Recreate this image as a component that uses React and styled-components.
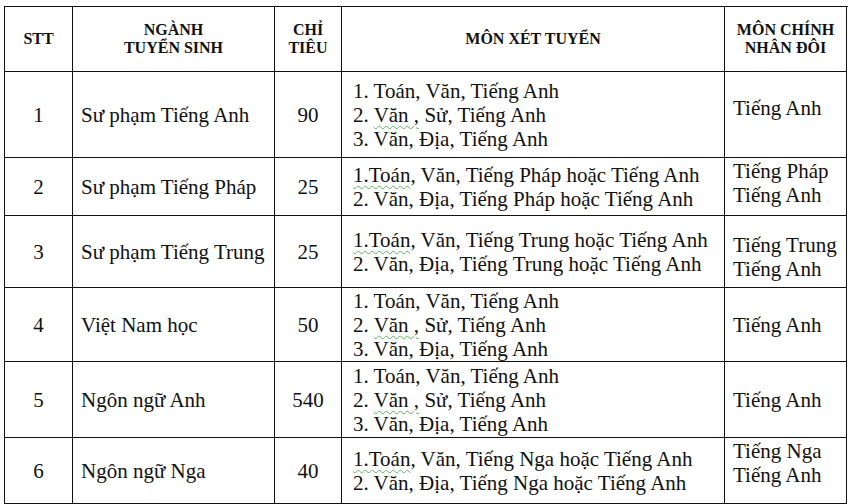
import React from 'react';
import styled, { createGlobalStyle } from 'styled-components';

const SERIF = "'Liberation Serif', 'Times New Roman', serif";

const GlobalStyle = createGlobalStyle`
  html, body {
    margin: 0;
    padding: 0;
    background: #fff;
    color: #111;
  }
`;

const Page = styled.div`
  padding: 6px 0 0 4px;
  font-family: ${SERIF};
`;

const Table = styled.div`
  width: 843px;
  border-top: 1px solid #111;
  border-left: 1px solid #111;
`;

const Row = styled.div`
  display: grid;
  grid-template-columns: 68px 202px 67px 383px 122px;
  height: ${props => props.$h}px;
`;

const HeadCell = styled.div`
  display: flex;
  align-items: center;
  justify-content: center;
  text-align: center;
  box-sizing: border-box;
  border-right: 1px solid #111;
  border-bottom: 1px solid #111;
  font-family: ${SERIF};
  font-size: 16px;
  font-weight: 700;
  line-height: 18px;
  text-transform: uppercase;
`;

const Cell = styled.div`
  display: flex;
  flex-direction: column;
  justify-content: center;
  align-items: ${props => (props.$center ? 'center' : 'flex-start')};
  box-sizing: border-box;
  border-right: 1px solid #111;
  border-bottom: 1px solid #111;
  font-family: ${SERIF};
  font-size: 21px;
  line-height: 24px;
  padding: ${props => props.$pad || '0'};
  white-space: nowrap;
`;

const Line = styled.div`
  white-space: nowrap;
`;

const Squiggle = styled.span`
  text-decoration: underline wavy #5cb85c;
  text-decoration-thickness: 1px;
  text-underline-offset: 3px;
`;

const rows = [
  {
    stt: '1', name: 'Sư phạm Tiếng Anh', quota: '90', h: 86,
    subjects: [
      <>1. Toán, Văn, Tiếng Anh</>,
      <>2. <Squiggle>Văn ,</Squiggle> Sử, Tiếng Anh</>,
      <>3. Văn, Địa, Tiếng Anh</>,
    ],
    main: ['Tiếng Anh'], mainPad: '0 0 14px 8px',
  },
  {
    stt: '2', name: 'Sư phạm Tiếng Pháp', quota: '25', h: 58,
    subjects: [
      <><Squiggle>1.Toán</Squiggle>, Văn, Tiếng Pháp hoặc Tiếng Anh</>,
      <>2. Văn, Địa, Tiếng Pháp hoặc Tiếng Anh</>,
    ],
    main: ['Tiếng Pháp', 'Tiếng Anh'], mainPad: '0 0 8px 8px',
  },
  {
    stt: '3', name: 'Sư phạm Tiếng Trung', quota: '25', h: 72,
    subjects: [
      <><Squiggle>1.Toán</Squiggle>, Văn, Tiếng Trung hoặc Tiếng Anh</>,
      <>2. Văn, Địa, Tiếng Trung hoặc Tiếng Anh</>,
    ],
    main: ['Tiếng Trung', 'Tiếng Anh'], mainPad: '10px 0 0 8px',
  },
  {
    stt: '4', name: 'Việt Nam học', quota: '50', h: 74,
    subjects: [
      <>1. Toán, Văn, Tiếng Anh</>,
      <>2. <Squiggle>Văn ,</Squiggle> Sử, Tiếng Anh</>,
      <>3. Văn, Địa, Tiếng Anh</>,
    ],
    main: ['Tiếng Anh'], mainPad: '0 0 0 8px',
  },
  {
    stt: '5', name: 'Ngôn ngữ Anh', quota: '540', h: 76,
    subjects: [
      <>1. Toán, Văn, Tiếng Anh</>,
      <>2. <Squiggle>Văn ,</Squiggle> Sử, Tiếng Anh</>,
      <>3. Văn, Địa, Tiếng Anh</>,
    ],
    main: ['Tiếng Anh'], mainPad: '0 0 0 8px',
  },
  {
    stt: '6', name: 'Ngôn ngữ Nga', quota: '40', h: 66,
    subjects: [
      <><Squiggle>1.Toán</Squiggle>, Văn, Tiếng Nga hoặc Tiếng Anh</>,
      <>2. Văn, Địa, Tiếng Nga hoặc Tiếng Anh</>,
    ],
    main: ['Tiếng Nga', 'Tiếng Anh'], mainPad: '0 0 16px 8px',
  },
];

export default function App() {
  return (
    <>
      <GlobalStyle />
      <Page>
        <Table>
          <Row $h={65}>
            <HeadCell>STT</HeadCell>
            <HeadCell>Ngành<br />Tuyển sinh</HeadCell>
            <HeadCell>Chỉ<br />tiêu</HeadCell>
            <HeadCell>Môn xét tuyển</HeadCell>
            <HeadCell>Môn chính<br />nhân đôi</HeadCell>
          </Row>
          {rows.map(r => (
            <Row key={r.stt} $h={r.h}>
              <Cell $center>{r.stt}</Cell>
              <Cell $pad="0 0 0 8px">{r.name}</Cell>
              <Cell $center>{r.quota}</Cell>
              <Cell $pad="0 0 0 11px">
                {r.subjects.map((s, i) => <Line key={i}>{s}</Line>)}
              </Cell>
              <Cell $pad={r.mainPad}>
                {r.main.map((m, i) => <Line key={i}>{m}</Line>)}
              </Cell>
            </Row>
          ))}
        </Table>
      </Page>
    </>
  );
}
